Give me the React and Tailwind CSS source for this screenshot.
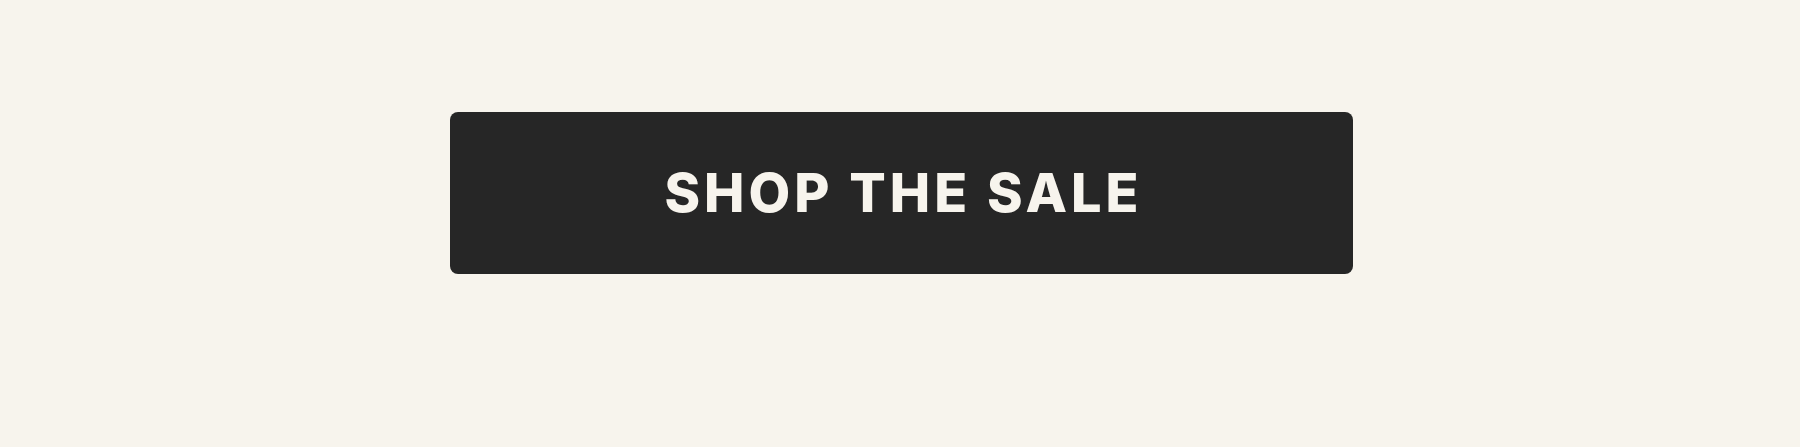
export default function App() {
  return (
    <div className="min-h-[447px] w-full bg-[#f7f4ed] pt-[112px]">
      <div className="ml-[450px] w-[903px]">
        <button
          type="button"
          className="flex h-[162px] w-full items-center justify-center rounded-[8px] bg-[#262626] pl-[4px] font-['Inter',sans-serif] text-[54px] font-extrabold uppercase leading-none tracking-[4px] text-[#f7f4ed]"
        >
          Shop the sale
        </button>
      </div>
    </div>
  );
}
